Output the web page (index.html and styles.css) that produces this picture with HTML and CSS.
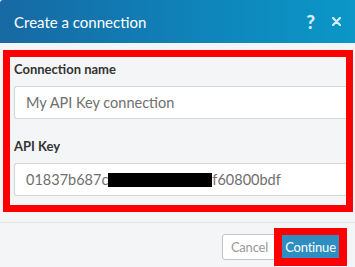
FILE: index.html
```html
<!DOCTYPE html>
<html>
<head>
<meta charset="utf-8">
<link rel="stylesheet" href="styles.css">
</head>
<body>
<div class="dialog">
  <div class="header">
    <span class="title">Create a connection</span>
    <span class="actions">
      <span class="help">?</span>
      <svg class="close" width="9" height="9" viewBox="0 0 9 9"><path d="M1 1L8 8M8 1L1 8" stroke="#d3ecf7" stroke-width="2.2" stroke-linecap="round"/></svg>
    </span>
  </div>
  <div class="form">
    <div class="field">
      <label class="label">Connection name</label>
      <div class="input placeholder">My API Key connection</div>
    </div>
    <div class="field">
      <label class="label">API Key</label>
      <div class="input value">01837b687c<span class="redact"></span>f60800bdf</div>
    </div>
  </div>
  <div class="footer">
    <button class="btn cancel">Cancel</button>
    <div class="highlight"><button class="btn primary">Continue</button></div>
  </div>
</div>
</body>
</html>
```
FILE: styles.css
```css
html, body { margin: 0; padding: 0; }
body {
  width: 355px;
  height: 267px;
  background: #f4f5f6;
  font-family: Lato, "Open Sans", sans-serif;
  overflow: hidden;
}
.dialog { display: flex; flex-direction: column; }
.header {
  height: 43px;
  background: linear-gradient(90deg, #1769a3 0%, #0f83b9 55%, #0b97c8 100%);
  display: flex;
  align-items: center;
  justify-content: space-between;
  padding: 0 14px 0 14px;
  border-top-left-radius: 3px;
}
.title { color: #fff; font-size: 15px; }
.actions { display: flex; align-items: center; gap: 17px; color: #d3ecf7; }
.help { font-size: 19px; font-weight: 900; line-height: 1; }
.close { display: block; }
.form {
  margin: 7px 2px 0 3px;
  border: 7px solid #ff0000;
  padding: 4px 0 9px 4px;
  display: flex;
  flex-direction: column;
  gap: 19px;
}
.field { display: flex; flex-direction: column; gap: 9px; }
.label { font-size: 13px; font-weight: 700; color: #333; line-height: 16px; }
.input {
  height: 31px;
  background: #fff;
  border: 1px solid #d6d6d6;
  border-right: none;
  border-radius: 3px 0 0 3px;
  display: flex;
  align-items: center;
  padding-left: 11px;
  font-size: 14.5px;
  color: #6f6f6f;
}
.redact { display: inline-block; width: 104px; height: 14px; background: #000; }
.footer {
  margin-top: 10px;
  border-top: 1px solid #e4e5e6;
  display: flex;
  justify-content: flex-end;
  align-items: center;
  padding: 5px 8px 0 0;
}
.btn {
  font-family: Lato, "Open Sans", sans-serif;
  font-size: 13px;
  letter-spacing: -0.2px;
  border-radius: 3px;
  cursor: pointer;
}
.cancel {
  height: 26px;
  width: 55px;
  background: #fff;
  border: 1px solid #c4c4c4;
  color: #999;
  padding: 0;
}
.highlight { border: 8px solid #ff0000; border-top-width: 7px; margin-left: -3px; }
.primary {
  display: block;
  height: 23px;
  width: 57px;
  background: #2e8ec0;
  border: none;
  color: #fff;
  padding: 0;
  border-radius: 0;
}
```
